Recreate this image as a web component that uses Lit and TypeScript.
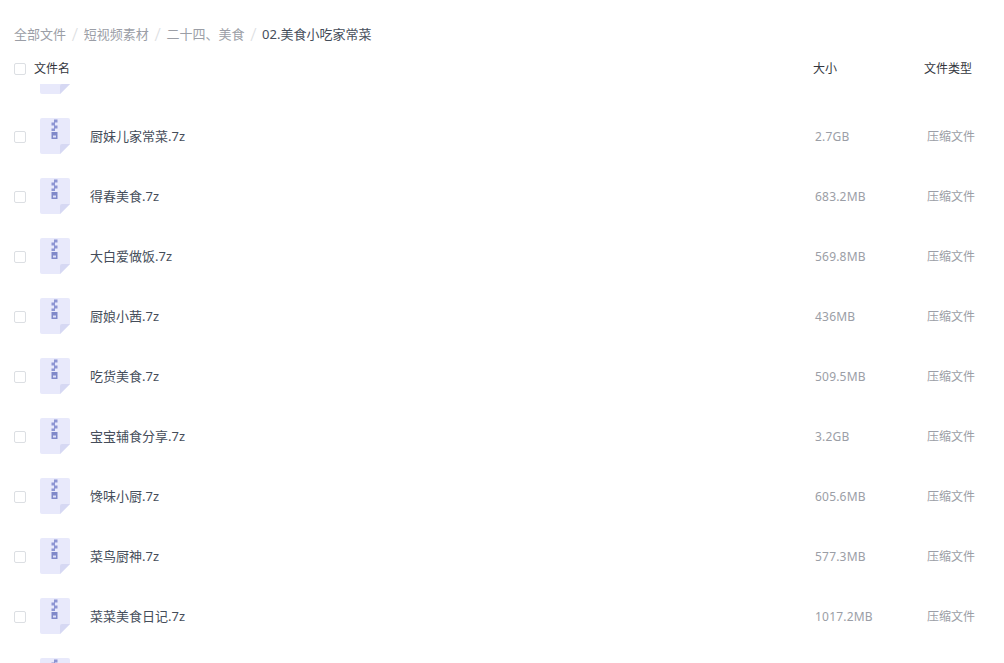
import { LitElement, html, css, svg } from "lit";
import { customElement } from "lit/decorators.js";

const FILES = [
  ["", ""],
  ["厨妹儿家常菜.7z", "2.7GB"],
  ["得春美食.7z", "683.2MB"],
  ["大白爱做饭.7z", "569.8MB"],
  ["厨娘小茜.7z", "436MB"],
  ["吃货美食.7z", "509.5MB"],
  ["宝宝辅食分享.7z", "3.2GB"],
  ["馋味小厨.7z", "605.6MB"],
  ["菜鸟厨神.7z", "577.3MB"],
  ["菜菜美食日记.7z", "1017.2MB"],
  ["", ""],
];

const icon = svg`<svg class="icon" width="30" height="36" viewBox="0 0 30 36">
  <path d="M2 0H28a2 2 0 0 1 2 2V26L20 36H2a2 2 0 0 1-2-2V2a2 2 0 0 1 2-2Z" fill="#e8e9fb"/>
  <path d="M30 26H22a2 2 0 0 0-2 2V36Z" fill="#d6d8f3"/>
  <path d="M14 1.500h3.500v3h-3.500zM11.500 4.500h3.500v3h-3.500zM14 7.500h3.500v3h-3.500zM11.500 10.500h3.500v2.500h-3.500z" fill="#8d95d3"/>
  <path d="M11.500 14h6v7h-6z" fill="#7f88c9"/>
  <path d="M13 17.500h3v2h-3z" fill="#dfe1f7"/>
</svg>`;

@customElement("app-root")
export class AppRoot extends LitElement {
  static styles = css`
    :host {
      display: flex;
      flex-direction: column;
      height: 663px;
      overflow: hidden;
      background: #fff;
      font-family: "Noto Sans", "Noto Sans CJK SC", sans-serif;
      font-size: 13px;
    }
    .crumbs {
      display: flex;
      align-items: center;
      height: 20px;
      margin: 24px 0 0 14px;
      color: #9b9ea6;
      line-height: 20px;
      flex: none;
    }
    .sep {
      color: #dcdee2;
      width: 17.7px;
      text-align: center;
      font-size: 18px;
      font-weight: 300;
    }
    .current {
      color: #454d5a;
    }
    .head,
    .row {
      display: flex;
      align-items: center;
      line-height: 20px;
    }
    .head {
      height: 20px;
      margin-top: 14px;
      padding-left: 14px;
      color: #33363d;
      font-size: 12px;
      flex: none;
    }
    .head span:not(.check) {
      padding-top: 2px;
    }
    .check {
      width: 10px;
      height: 10px;
      margin-top: 2px;
      border: 1px solid #dcdfe3;
      border-radius: 2px;
      flex: none;
    }
    .head .name {
      margin-left: 8px;
      flex: 1;
    }
    .head .size {
      width: 111px;
    }
    .head .type {
      width: 80px;
    }
    .list {
      flex: 1;
      min-height: 0;
      overflow: hidden;
      margin-top: 6px;
    }
    .rows {
      margin-top: -38px;
    }
    .row {
      height: 60px;
      padding-left: 14px;
    }
    .spacer {
      width: 12px;
      flex: none;
    }
    .icon {
      margin-left: 14px;
      flex: none;
    }
    .row .name {
      margin-left: 20px;
      flex: 1;
      color: #454d5a;
    }
    .row .size {
      width: 112px;
      color: #9b9ea6;
      font-size: 12px;
      letter-spacing: 0.2px;
      padding-top: 2px;
    }
    .row .type {
      width: 77px;
      color: #9b9ea6;
      font-size: 12px;
      padding-top: 2px;
    }
  `;

  render() {
    const crumbs = ["全部文件", "短视频素材", "二十四、美食"];
    return html`
      <div class="crumbs">
        ${crumbs.map((c) => html`<span>${c}</span><span class="sep">/</span>`)}
        <span class="current">02.美食小吃家常菜</span>
      </div>
      <div class="head">
        <span class="check"></span>
        <span class="name">文件名</span>
        <span class="size">大小</span>
        <span class="type">文件类型</span>
      </div>
      <div class="list">
        <div class="rows">
          ${FILES.map(([n, s]) =>
            n
              ? html`<div class="row">
                  <span class="check"></span>
                  ${icon}
                  <span class="name">${n}</span>
                  <span class="size">${s}</span>
                  <span class="type">压缩文件</span>
                </div>`
              : html`<div class="row"><span class="spacer"></span>${icon}</div>`
          )}
        </div>
      </div>
    `;
  }
}
